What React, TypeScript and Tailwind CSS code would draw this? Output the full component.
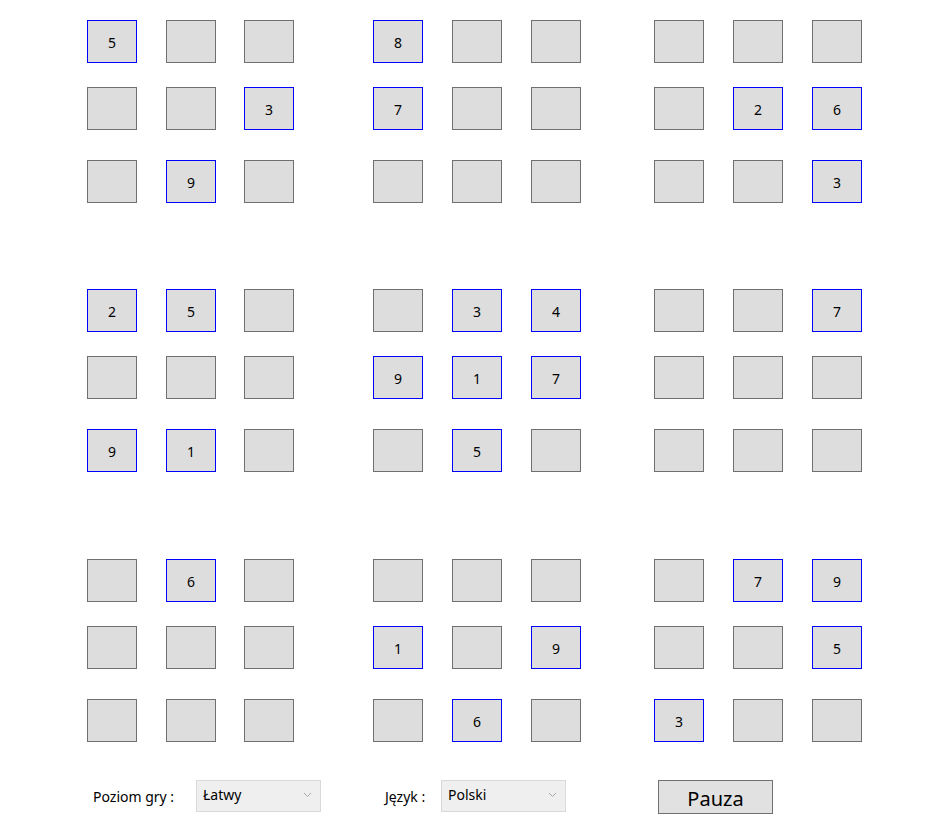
import React from "react";

const grid: (number | null)[][] = [
  [5, null, null, 8, null, null, null, null, null],
  [null, null, 3, 7, null, null, null, 2, 6],
  [null, 9, null, null, null, null, null, null, 3],
  [2, 5, null, null, 3, 4, null, null, 7],
  [null, null, null, 9, 1, 7, null, null, null],
  [9, 1, null, null, 5, null, null, null, null],
  [null, 6, null, null, null, null, null, 7, 9],
  [null, null, null, 1, null, 9, null, null, 5],
  [null, null, null, null, 6, null, 3, null, null],
];

const font = { fontFamily: '"Segoe UI", "Noto Sans", "Open Sans", sans-serif' };

function Chevron() {
  return (
    <svg width="9" height="6" viewBox="0 0 9 6" className="shrink-0">
      <path d="M1 1 L4.5 4.5 L8 1" fill="none" stroke="#a8a8a8" strokeWidth="1" />
    </svg>
  );
}

function Select({ value }: { value: string }) {
  return (
    <div className="w-[125px] h-[32px] bg-[#efefef] border border-[#d9d9d9] flex items-center justify-between pl-[6px] pr-[8px] pb-[3px]">
      <span className="text-[14px] text-black">{value}</span>
      <Chevron />
    </div>
  );
}

export default function App() {
  return (
    <div className="w-[925px] h-[827px] bg-white pl-[87px] pt-[20px]" style={font}>
      <div className="grid grid-cols-[79px_78px_129px_79px_79px_123px_79px_79px_50px] grid-rows-[67px_73px_129px_67px_73px_130px_67px_73px_43px]">
        {grid.flatMap((row, r) =>
          row.map((v, c) => (
            <div
              key={`${r}-${c}`}
              className={`w-[50px] h-[43px] bg-[#dddddd] border flex items-center justify-center pt-[1px] text-[14px] text-black ${
                v !== null ? "border-[#0000ff]" : "border-[#707070]"
              }`}
            >
              {v ?? ""}
            </div>
          ))
        )}
      </div>
      <div className="mt-[38px] flex items-start">
        <div className="w-[109px] h-[32px] pl-[6px] flex items-center text-[14px] text-black">Poziom gry :</div>
        <Select value="Łatwy" />
        <div className="ml-[64px] w-[56px] h-[32px] flex items-center text-[14px] text-black">Język :</div>
        <Select value="Polski" />
        <div className="ml-[92px] w-[115px] h-[34px] bg-[#e1e1e1] border border-[#707070] flex items-center justify-center pt-[3px] text-[20px] text-black">
          Pauza
        </div>
      </div>
    </div>
  );
}
